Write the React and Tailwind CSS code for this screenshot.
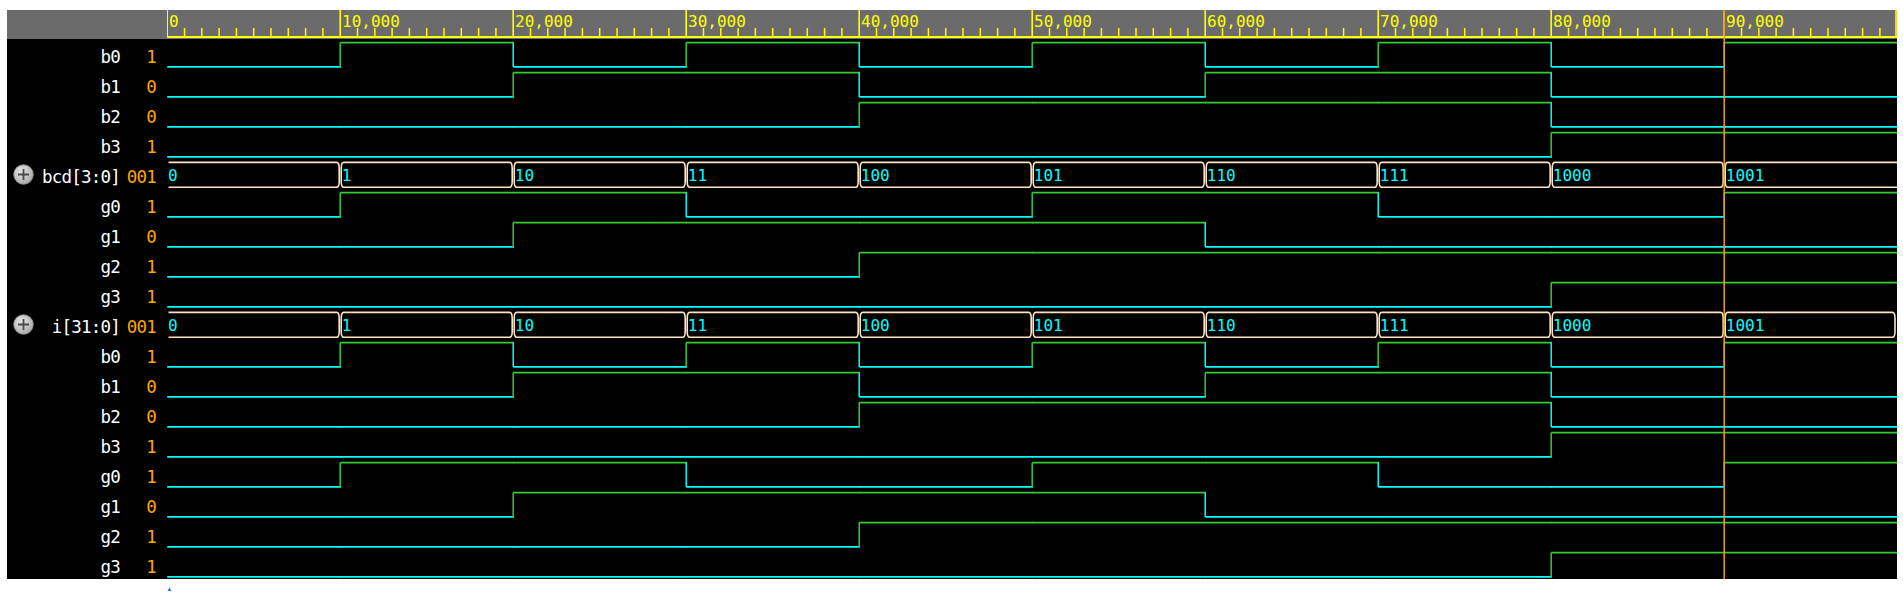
import React from 'react';

const CYAN = '#00ffff';
const GREEN = '#33cc33';
const BUS = '#ffe4c4';
const CURSOR = '#e8a020';
const MONO = { fontFamily: '"DejaVu Sans Mono", "Liberation Mono", monospace' };

// x position (inside the wave area) of a time given in thousands
const X = (k) => 0.2 + 17.3 * k;
const WIDTH = 1730;
const STEPS = 10;

const bit = (n, b) => (n >> b) & 1;
const gray = (n) => n ^ (n >> 1);

const rows = [
  { name: 'b0', value: '1', fn: (i) => bit(i, 0) },
  { name: 'b1', value: '0', fn: (i) => bit(i, 1) },
  { name: 'b2', value: '0', fn: (i) => bit(i, 2) },
  { name: 'b3', value: '1', fn: (i) => bit(i, 3) },
  { name: 'bcd[3:0]', value: '001', bus: true, group: true },
  { name: 'g0', value: '1', fn: (i) => bit(gray(i), 0) },
  { name: 'g1', value: '0', fn: (i) => bit(gray(i), 1) },
  { name: 'g2', value: '1', fn: (i) => bit(gray(i), 2) },
  { name: 'g3', value: '1', fn: (i) => bit(gray(i), 3) },
  { name: 'i[31:0]', value: '001', bus: true, group: true, closed: true },
  { name: 'b0', value: '1', fn: (i) => bit(i, 0) },
  { name: 'b1', value: '0', fn: (i) => bit(i, 1) },
  { name: 'b2', value: '0', fn: (i) => bit(i, 2) },
  { name: 'b3', value: '1', fn: (i) => bit(i, 3) },
  { name: 'g0', value: '1', fn: (i) => bit(gray(i), 0) },
  { name: 'g1', value: '0', fn: (i) => bit(gray(i), 1) },
  { name: 'g2', value: '1', fn: (i) => bit(gray(i), 2) },
  { name: 'g3', value: '1', fn: (i) => bit(gray(i), 3) },
];

function PlusIcon() {
  return (
    <svg width="21" height="21" viewBox="0 0 21 21">
      <defs>
        <radialGradient id="pg" cx="40%" cy="35%" r="70%">
          <stop offset="0%" stopColor="#e8e8e8" />
          <stop offset="100%" stopColor="#a6a6a6" />
        </radialGradient>
      </defs>
      <circle cx="10.5" cy="10.5" r="9.8" fill="url(#pg)" stroke="#8c8c8c" strokeWidth="0.8" />
      <path d="M10.5 5v11M5 10.5h11" stroke="#4a4a4a" strokeWidth="1.8" />
    </svg>
  );
}

function Ruler() {
  const ticks = [];
  for (let k = 1; k < 100; k++) {
    if (k % 10 === 0) continue;
    ticks.push(<line key={k} x1={X(k)} x2={X(k)} y1="18" y2="27" stroke="#ffff00" strokeWidth="1.5" />);
  }
  const majors = [];
  for (let j = 0; j < 10; j++) {
    const x = X(j * 10);
    majors.push(
      <g key={j}>
        <line x1={x} x2={x} y1="0" y2="27" stroke="#ffff00" strokeWidth="1.6" />
        <text x={x + 1.8} y="17" fill="#ffff00" fontSize="16" style={MONO}>
          {(j * 10000).toLocaleString('en-US')}
        </text>
      </g>
    );
  }
  return (
    <svg width={WIDTH} height="29" className="block">
      <rect x="0" y="0" width={WIDTH} height="29" fill="#6b6b6b" />
      <rect x="0" y="26" width={WIDTH} height="2" fill="#ffff00" />
      {ticks}
      {majors}
      <line x1={WIDTH - 1} x2={WIDTH - 1} y1="0" y2="28" stroke="#ffff00" strokeWidth="1.6" />
      <line x1={X(90)} x2={X(90)} y1="0" y2="29" stroke={CURSOR} strokeWidth="1.5" />
    </svg>
  );
}

function BinaryWave({ top, fn }) {
  const hi = top + 3.6;
  const lo = top + 27.9;
  const parts = [];
  for (let i = 0; i < STEPS; i++) {
    const v = fn(i);
    const x1 = X(i * 10);
    const x2 = i === STEPS - 1 ? WIDTH : X((i + 1) * 10) + 0.8;
    const c = v ? GREEN : CYAN;
    parts.push(<line key={'h' + i} x1={x1} x2={x2} y1={v ? hi : lo} y2={v ? hi : lo} stroke={c} strokeWidth="1.7" />);
    if (i > 0 && fn(i - 1) !== v) {
      parts.push(<line key={'v' + i} x1={x1} x2={x1} y1={hi} y2={lo} stroke={c} strokeWidth="1.5" />);
    }
  }
  return <g>{parts}</g>;
}

function BusWave({ top, closed }) {
  const t = top + 3.4;
  const b = top + 28.2;
  const parts = [];
  for (let i = 0; i < STEPS; i++) {
    const last = i === STEPS - 1;
    const x1 = i === 0 ? 1.5 : X(i * 10);
    const x2 = last ? (closed ? WIDTH - 1 : WIDTH) : X((i + 1) * 10);
    let d;
    const left = i === 0 ? `M${x1},${t}` : `M${x1 + 1},${t + 6} Q${x1 + 1},${t} ${x1 + 3.5},${t}`;
    const leftB = i === 0 ? `M${x1},${b}` : `M${x1 + 1},${b - 6} Q${x1 + 1},${b} ${x1 + 3.5},${b}`;
    if (last && !closed) {
      d = `${left} L${x2},${t} ${leftB} L${x2},${b}` + (i === 0 ? '' : ` M${x1 + 1},${t + 6} L${x1 + 1},${b - 6}`);
    } else {
      d =
        (i === 0 ? `M${x1},${t}` : `M${x1 + 1},${b - 6} L${x1 + 1},${t + 6} Q${x1 + 1},${t} ${x1 + 3.5},${t}`) +
        ` L${x2 - 3.5},${t} Q${x2 - 1},${t} ${x2 - 1},${t + 6} L${x2 - 1},${b - 6} Q${x2 - 1},${b} ${x2 - 3.5},${b}` +
        (i === 0 ? ` L${x1},${b}` : ` L${x1 + 3.5},${b} Q${x1 + 1},${b} ${x1 + 1},${b - 6}`);
    }
    parts.push(<path key={'p' + i} d={d} fill="none" stroke={BUS} strokeWidth="1.6" />);
    parts.push(
      <text key={'t' + i} x={i === 0 ? 1 : x1 + 1.6} y={top + 22} fill={CYAN} fontSize="16" style={MONO}>
        {i.toString(2)}
      </text>
    );
  }
  return <g>{parts}</g>;
}

function Waves() {
  return (
    <svg width={WIDTH} height={rows.length * 30} className="block">
      {rows.map((r, idx) =>
        r.bus ? (
          <BusWave key={idx} top={idx * 30} closed={r.closed} />
        ) : (
          <BinaryWave key={idx} top={idx * 30} fn={r.fn} />
        )
      )}
      <line x1={X(90)} x2={X(90)} y1="0" y2={rows.length * 30} stroke={CURSOR} strokeWidth="1.5" />
    </svg>
  );
}

export default function App() {
  return (
    <div className="w-full h-[592px] bg-white pl-[7px] pt-[10px]">
      <div className="flex w-[1890px] bg-black">
        {/* signal names + values */}
        <div className="w-[160px] shrink-0" style={MONO}>
          <div className="h-[29px] bg-[#6b6b6b]" />
          {rows.map((r, idx) => (
            <div key={idx} className="flex h-[30px] text-[17.5px] tracking-[-0.8px]">
              <div className="w-[32px] flex items-center justify-center">{r.group && <PlusIcon />}</div>
              <div className="w-[81px] text-right text-white pt-[6px] leading-[24px] whitespace-nowrap">{r.name}</div>
              <div className="w-[36px] text-right text-[#ffa500] pt-[6px] leading-[24px]">{r.value}</div>
            </div>
          ))}
        </div>
        {/* timeline */}
        <div className="w-[1730px]">
          <Ruler />
          <Waves />
        </div>
      </div>
      <div className="ml-[160px] mt-[8px]">
        <svg width="5" height="4" className="block">
          <path d="M0.5 4 L2.5 0.5 L4.5 4 Z" fill="#3a6fd8" />
        </svg>
      </div>
    </div>
  );
}
